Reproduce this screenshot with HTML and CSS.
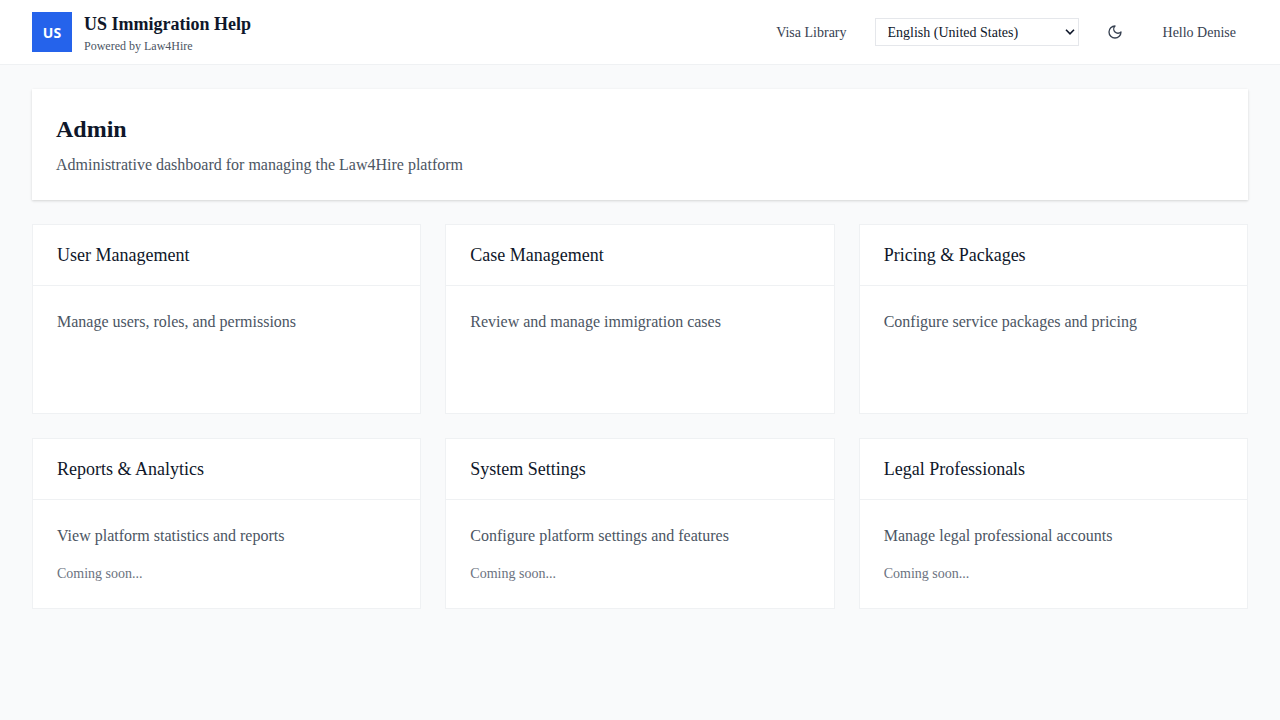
FILE: index.html
```html
<!DOCTYPE html>
<html lang="en-US">
<head>
<meta charset="utf-8">
<meta name="viewport" content="width=device-width, initial-scale=1">
<title>US Immigration Help</title>
<link rel="stylesheet" href="styles.css">
</head>
<body>
<header class="topbar">
  <div class="brand">
    <div class="logo">US</div>
    <div class="brand-text">
      <div class="brand-name">US Immigration Help</div>
      <div class="brand-sub">Powered by Law4Hire</div>
    </div>
  </div>
  <nav class="nav">
    <a class="nav-item" href="#">Visa Library</a>
    <div class="language-field">
      <select class="language" aria-label="Language">
        <option>English (United States)</option>
      </select>
      <svg class="chevron" width="10" height="6" viewBox="0 0 10 6" fill="none" stroke="currentColor" stroke-width="1.600"><path d="M1 .8l4 4 4-4"/></svg>
    </div>
    <button class="theme-toggle" type="button" aria-label="Toggle dark mode">
      <svg width="16" height="16" viewBox="0 0 24 24" fill="none" stroke="currentColor" stroke-width="2" stroke-linecap="round" stroke-linejoin="round"><path d="M12 3a6 6 0 0 0 9 9 9 9 0 1 1-9-9Z"/></svg>
    </button>
    <button class="nav-item" type="button">Hello Denise</button>
  </nav>
</header>
<main class="main">
  <section class="hero">
    <h1 class="hero-title">Admin</h1>
    <p class="text">Administrative dashboard for managing the Law4Hire platform</p>
  </section>
  <div class="grid">
    <section class="card card-tall">
      <h2 class="card-title">User Management</h2>
      <div class="card-body"><p class="text">Manage users, roles, and permissions</p></div>
    </section>
    <section class="card card-tall">
      <h2 class="card-title">Case Management</h2>
      <div class="card-body"><p class="text">Review and manage immigration cases</p></div>
    </section>
    <section class="card card-tall">
      <h2 class="card-title">Pricing &amp; Packages</h2>
      <div class="card-body"><p class="text">Configure service packages and pricing</p></div>
    </section>
    <section class="card">
      <h2 class="card-title">Reports &amp; Analytics</h2>
      <div class="card-body"><p class="text">View platform statistics and reports</p><p class="soon">Coming soon...</p></div>
    </section>
    <section class="card">
      <h2 class="card-title">System Settings</h2>
      <div class="card-body"><p class="text">Configure platform settings and features</p><p class="soon">Coming soon...</p></div>
    </section>
    <section class="card">
      <h2 class="card-title">Legal Professionals</h2>
      <div class="card-body"><p class="text">Manage legal professional accounts</p><p class="soon">Coming soon...</p></div>
    </section>
  </div>
</main>
</body>
</html>
```
FILE: styles.css
```css
* { box-sizing: border-box; margin: 0; padding: 0; }
body {
  background: #f9fafb;
  color: #0f172a;
  font-family: "Liberation Serif", "Times New Roman", serif;
  font-size: 16px;
  line-height: 24px;
}
.topbar {
  display: flex;
  align-items: center;
  justify-content: space-between;
  padding: 10px 32px;
  background: #fff;
  border-bottom: 1px solid #eff1f3;
}
.brand { display: flex; align-items: center; gap: 12px; }
.logo {
  display: flex;
  align-items: center;
  justify-content: center;
  width: 40px;
  height: 40px;
  background: #2563eb;
  color: #fff;
  font: 700 14px "Noto Sans", sans-serif;
}
.brand-name { font-size: 18px; font-weight: 700; line-height: 28px; }
.brand-sub { font-size: 12px; line-height: 16px; color: #4b5563; }
.nav { display: flex; align-items: center; gap: 16px; }
.nav-item {
  padding: 2px 12px 0;
  border: 0;
  background: none;
  color: #374151;
  font: 14px/20px "Liberation Serif", serif;
  text-decoration: none;
}
.language-field { position: relative; }
.language {
  display: block;
  width: 204px;
  height: 28px;
  padding: 0 24px 0 12px;
  appearance: none;
  border: 1px solid #e5e7eb;
  border-radius: 0;
  background: #fff;
  color: #0f172a;
  font: 14px "Liberation Serif", serif;
}
.chevron {
  position: absolute;
  top: 11px;
  right: 4px;
  color: #0f172a;
  pointer-events: none;
}
.theme-toggle {
  display: flex;
  padding: 12px;
  border: 0;
  background: none;
  color: #374151;
}
.main { display: grid; gap: 24px; padding: 24px 32px; }
.hero {
  padding: 24px 24px 23px;
  background: #fff;
  box-shadow: 0 1px 3px rgba(0, 0, 0, .1), 0 1px 2px rgba(0, 0, 0, .06);
}
.hero-title { margin-bottom: 8px; font-size: 24px; line-height: 32px; }
.text { color: #4b5563; }
.grid { display: grid; grid-template-columns: repeat(3, 1fr); gap: 24px; }
.card { background: #fff; border: 1px solid #eff1f3; }
.card-tall { min-height: 190px; }
.card-title {
  padding: 16px 24px;
  border-bottom: 1px solid #eff1f3;
  font-size: 18px;
  font-weight: 400;
  line-height: 28px;
}
.card-body { padding: 24px; }
.soon { margin-top: 16px; font-size: 14px; line-height: 20px; color: #6b7280; }
```
